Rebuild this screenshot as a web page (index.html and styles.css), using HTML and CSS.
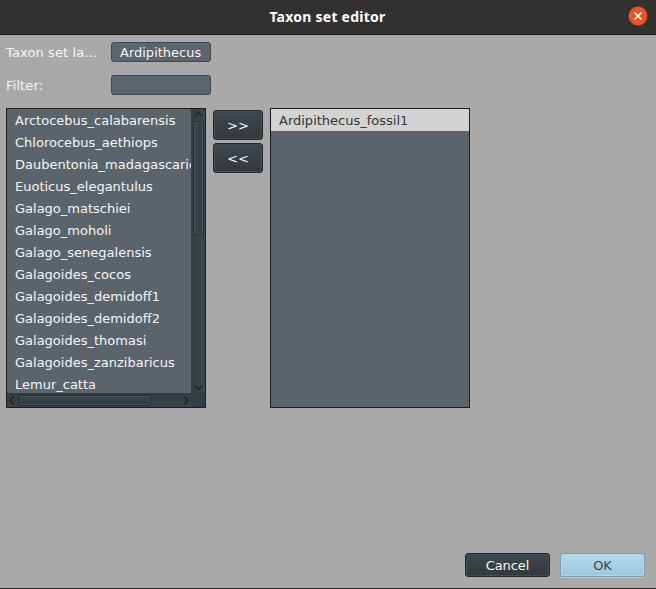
FILE: index.html
```html
<!DOCTYPE html>
<html lang="en">
<head>
<meta charset="utf-8">
<title>Taxon set editor</title>
<link rel="stylesheet" href="styles.css">
</head>
<body>
<div class="window">
  <header class="titlebar">
    <h1>Taxon set editor</h1>
    <button class="close" aria-label="Close"><svg width="20" height="20" viewBox="0 0 20 20"><circle cx="10" cy="10" r="9.4"/><path d="M6.500 6.500l7 7M13.500 6.500l-7 7"/></svg></button>
  </header>
  <main>
    <div class="fields">
      <span class="label">Taxon set la...</span><div class="input">Ardipithecus</div>
      <span class="label">Filter:</span><div class="input"></div>
    </div>
    <div class="picker">
      <div class="list source">
        <ul>
          <li>Arctocebus_calabarensis</li>
          <li>Chlorocebus_aethiops</li>
          <li>Daubentonia_madagascariensis</li>
          <li>Euoticus_elegantulus</li>
          <li>Galago_matschiei</li>
          <li>Galago_moholi</li>
          <li>Galago_senegalensis</li>
          <li>Galagoides_cocos</li>
          <li>Galagoides_demidoff1</li>
          <li>Galagoides_demidoff2</li>
          <li>Galagoides_thomasi</li>
          <li>Galagoides_zanzibaricus</li>
          <li>Lemur_catta</li>
        </ul>
        <div class="vbar">
          <svg width="14" height="12"><path d="M3.500 7.500L7.500 3.500l4 4"/></svg>
          <div class="thumb"></div>
          <svg class="end" width="14" height="12"><path d="M3.500 4.500L7.500 8.500l4-4"/></svg>
        </div>
        <div class="hbar">
          <svg width="12" height="14"><path d="M7 3.500L3 7.500l4 4"/></svg>
          <div class="thumb"></div>
          <svg class="end" width="12" height="14"><path d="M5 3.500l4 4l-4 4"/></svg>
        </div>
        <div class="corner"></div>
      </div>
      <div class="moves">
        <button class="btn">&gt;&gt;</button>
        <button class="btn">&lt;&lt;</button>
      </div>
      <div class="list">
        <ul><li class="selected">Ardipithecus_fossil1</li></ul>
      </div>
    </div>
    <footer>
      <button class="btn">Cancel</button>
      <button class="btn primary">OK</button>
    </footer>
  </main>
</div>
</body>
</html>
```
FILE: styles.css
```css
* { box-sizing: border-box; }
body { margin: 0; font: 13px/22px "DejaVu Sans", sans-serif; color: #f5f5f5; }
button { margin: 0; padding: 0; border: 0; font: inherit; color: inherit; }
.window { display: flex; flex-direction: column; width: 656px; height: 589px; background: #a9a9a9; border-bottom: 1px solid #29252b; overflow: hidden; }
.titlebar { display: grid; grid-template-columns: 27px 1fr 28px; align-items: center; height: 35px; padding-bottom: 2px; background: #333030; border-bottom: 1px solid #1f1d1d; }
.titlebar h1 { grid-column: 2; margin: 0; padding-top: 2px; text-align: center; font: bold 14px/20px "Noto Sans", sans-serif; letter-spacing: 0.25px; color: #fff; }
.close { width: 20px; height: 20px; background: none; }
.close svg { display: block; }
.close circle { fill: #e95420; }
.close path { stroke: #fff; stroke-width: 1.6; fill: none; }
main { flex: 1; display: flex; flex-direction: column; padding: 7px 11px 11px 6px; }
.fields { display: grid; grid-template-columns: 95px 100px; column-gap: 10px; row-gap: 13px; }
.label { height: 20px; line-height: 22px; letter-spacing: 0.12px; white-space: nowrap; }
.input { height: 20px; padding-left: 8px; line-height: 19px; background: #5b656d; border: 1px solid #41494f; border-radius: 3px; }
.picker { display: flex; margin-top: 13px; }
.list { width: 200px; height: 300px; background: #5b646b; border: 1px solid #191d20; }
.list ul { list-style: none; margin: 0; padding: 0; overflow: hidden; }
.list li { height: 22px; padding-left: 8px; line-height: 24px; white-space: nowrap; }
.list .selected { background: #d3d3d3; color: #333; }
.source { display: grid; grid-template: 284px 14px / 184px 14px; }
.vbar { display: flex; flex-direction: column; background: linear-gradient(90deg, #343c40, #3c4548); }
.hbar { display: flex; background: linear-gradient(#343c40, #3c4548); }
.corner { background: #343d43; }
.list svg { display: block; flex: none; fill: none; stroke: #1d2225; stroke-width: 1.3; }
.thumb { border: 1px solid #262d31; border-radius: 2px; box-shadow: inset 0 0 0 1px #465056; }
.vbar .thumb { width: 11px; height: 114px; margin-left: 2px; background: linear-gradient(90deg, #3d464c, #333b3f); }
.hbar .thumb { width: 132px; height: 11px; margin-top: 2px; background: linear-gradient(#3d464c, #333b3f); }
.vbar .end { margin-top: auto; }
.hbar .end { margin-left: auto; }
.moves { display: flex; flex-direction: column; gap: 3px; width: 50px; margin: 2px 7px 0; }
.btn { height: 30px; border: 1px solid #24292d; border-radius: 3px; background: linear-gradient(#3f484e, #32393c); box-shadow: inset 0 0 0 1px #414c53; }
.moves .btn { padding-top: 1px; }
footer { display: flex; justify-content: flex-end; gap: 10px; margin-top: auto; }
footer .btn { width: 85px; height: 24px; padding-top: 2px; line-height: 20px; letter-spacing: -0.1px; }
.primary { background: linear-gradient(#b3daec, #9bc7db); border-color: #76a0b2; box-shadow: inset 0 0 0 1px #b3d9e9, 0 1px #bfc4c6; color: #3d464b; }
```
